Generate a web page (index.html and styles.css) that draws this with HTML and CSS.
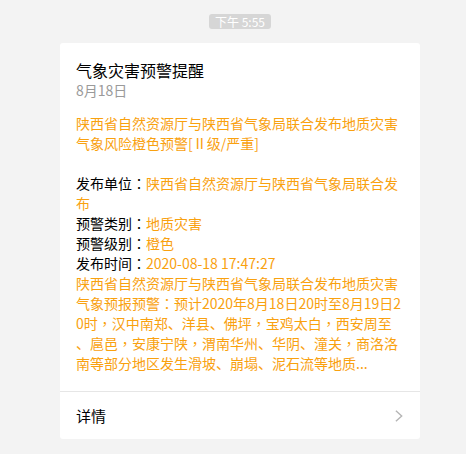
FILE: index.html
```html
<!DOCTYPE html>
<html lang="zh-CN">
<head>
<meta charset="utf-8">
<title>气象灾害预警提醒</title>
<link rel="stylesheet" href="styles.css">
</head>
<body>
<div class="column">
  <div class="time-row"><span class="time">下午 5:55</span></div>
  <div class="card">
    <div class="card-body">
      <div class="title">气象灾害预警提醒</div>
      <div class="date">8月18日</div>
      <p class="orange para">陕西省自然资源厅与陕西省气象局联合发布地质灾害气象风险橙色预警[Ⅱ级/严重]</p>
      <div class="fields">
        <div class="field">发布单位<span class="pc" lang="zh-TW">：</span><span class="orange">陕西省自然资源厅与陕西省气象局联合发布</span></div>
        <div class="field">预警类别<span class="pc" lang="zh-TW">：</span><span class="orange">地质灾害</span></div>
        <div class="field">预警级别<span class="pc" lang="zh-TW">：</span><span class="orange">橙色</span></div>
        <div class="field">发布时间<span class="pc" lang="zh-TW">：</span><span class="orange">2020-08-18 17:47:27</span></div>
        <p class="orange desc">陕西省自然资源厅与陕西省气象局联合发布地质灾害气象预报预警<span class="pc" lang="zh-TW">：</span>预计2020年8月18日20时至8月19日20时<span class="pc" lang="zh-TW">，</span>汉中南郑、洋县、佛坪<span class="pc" lang="zh-TW">，</span>宝鸡太白<span class="pc" lang="zh-TW">，</span>西安周至、扈邑<span class="pc" lang="zh-TW">，</span>安康宁陕<span class="pc" lang="zh-TW">，</span>渭南华州、华阴、潼关<span class="pc" lang="zh-TW">，</span>商洛洛南等部分地区发生滑坡、崩塌、泥石流等地质...</p>
      </div>
    </div>
    <div class="card-footer">
      <span class="more">详情</span>
      <svg class="chevron" width="8" height="12" viewBox="0 0 8 12"><path d="M0.9 0.7 L6.7 6 L0.9 11.3" fill="none" stroke="#b5b5b5" stroke-width="1.4"/></svg>
    </div>
  </div>
</div>
</body>
</html>
```
FILE: styles.css
```css
html, body {
  margin: 0;
  padding: 0;
}
body {
  background: #f3f3f3;
  font-family: "Noto Sans CJK SC", "Noto Sans", sans-serif;
  color: #000;
}
.column {
  width: 360px;
  margin-left: 60px;
  padding-top: 14px;
}
.time-row {
  display: flex;
  justify-content: center;
}
.time {
  background: #d6d6d6;
  color: #fff;
  font-size: 12px;
  line-height: 15px;
  padding: 0 6px;
  border-radius: 3px;
}
.card {
  margin-top: 14px;
  background: #fff;
  border-radius: 3px;
}
.card-body {
  padding: 17px 16px 18px 16px;
  font-size: 14px;
  line-height: 20px;
  word-break: break-all;
  line-break: anywhere;
}
.title {
  font-size: 16px;
  line-height: 20px;
}
.date {
  color: #9a9a9a;
  font-size: 14px;
  line-height: 20px;
  margin-bottom: 13px;
}
.orange {
  color: #f9a10f;
}
.pc {
  font-family: "Noto Sans CJK TC", "Noto Sans CJK SC", sans-serif;
}
.para {
  margin: 0 0 20px 0;
}
.desc {
  margin: 0;
}
.card-footer {
  border-top: 1px solid #e6e6e6;
  height: 47px;
  display: flex;
  align-items: center;
  justify-content: space-between;
  padding: 0 17px 0 16px;
}
.more {
  font-size: 15px;
}
.chevron {
  display: block;
}
```
